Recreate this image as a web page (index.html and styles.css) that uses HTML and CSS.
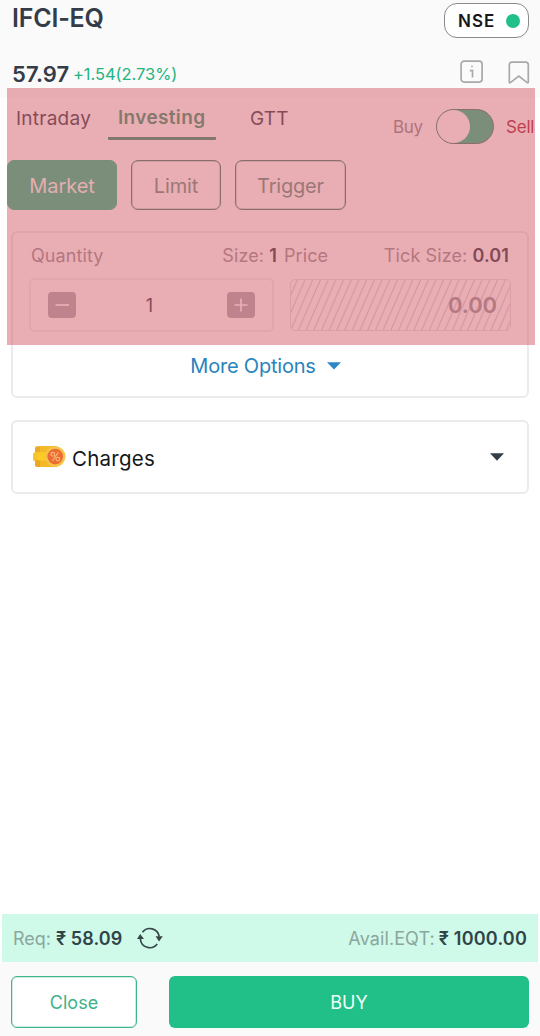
FILE: index.html
```html
<!DOCTYPE html>
<html lang="en">
<head>
<meta charset="utf-8">
<title>IFCI-EQ order</title>
<link rel="stylesheet" href="styles.css">
</head>
<body>
<div class="screen">
  <header class="header">
    <div class="title-row">
      <h1 class="symbol">IFCI-EQ</h1>
      <div class="exchange"><span class="exchange-name">NSE</span><span class="dot"></span></div>
    </div>
    <div class="price-row">
      <span class="price">57.97</span>
      <span class="change">+1.54(2.73%)</span>
      <svg class="info-icon" width="24" height="24" viewBox="0 0 24 24"><rect x="1.1" y="1.1" width="21" height="21" rx="3"/><path d="M9.8 10.6H12.5V17.6M11.3 6.4H12.7"/></svg>
      <svg class="bookmark-icon" width="22" height="24" viewBox="0 0 22 24"><path d="M1.3 21V4Q1.3 1.2 4 1.2H17.7Q20.3 1.2 20.3 4V21Q20.2 22.4 19.2 21.6L10.8 15L2.4 21.6Q1.4 22.4 1.3 21Z"/></svg>
    </div>
  </header>

  <nav class="tabs">
    <span class="tab tab-intraday">Intraday</span>
    <span class="tab tab-active">Investing</span>
    <span class="tab tab-gtt">GTT</span>
    <span class="side side-buy">Buy</span>
    <span class="toggle"><span class="knob"></span></span>
    <span class="side side-sell">Sell</span>
  </nav>

  <div class="order-types">
    <button class="type type-selected">Market</button>
    <button class="type type-limit">Limit</button>
    <button class="type type-trigger">Trigger</button>
  </div>

  <section class="card order-card">
    <div class="fields">
      <div class="field quantity">
        <div class="label-row"><span class="l-quantity">Quantity</span><span class="l-size">Size: <b>1</b></span></div>
        <div class="stepper">
          <span class="step"><svg width="28" height="26" viewBox="0 0 28 26"><path d="M7.5 13H21"/></svg></span>
          <span class="qty">1</span>
          <span class="step"><svg width="28" height="26" viewBox="0 0 28 26"><path d="M7.5 13H20.5M14 6.5V19.5"/></svg></span>
        </div>
      </div>
      <div class="field price-field">
        <div class="label-row"><span class="l-price">Price</span><span class="l-tick">Tick Size: <b>0.01</b></span></div>
        <div class="hatched">
          <svg class="hatch" width="221" height="52"><defs><pattern id="stripe" width="7.7" height="17.6" patternUnits="userSpaceOnUse"><path d="M-7.7 17.6L0 0M0 17.6L7.7 0M7.7 17.6L15.4 0"/></pattern></defs><rect width="221" height="52" fill="url(#stripe)"/></svg>
          <span class="limit-price">0.00</span>
        </div>
      </div>
    </div>
    <div class="more"><span class="more-text">More Options</span><svg width="14" height="8" viewBox="0 0 14 8"><path d="M0 .3H14L7 7.5Z"/></svg></div>
  </section>

  <section class="card charges">
    <svg class="coins" width="34" height="24" viewBox="0 0 34 24">
      <rect x="2" y="1.2" width="23" height="7" rx="2" fill="#e9a72c"/>
      <rect x="0" y="7.2" width="20" height="9" rx="2" fill="#f6c52c"/>
      <rect x="2" y="14.8" width="23" height="7.2" rx="2" fill="#e8a62b"/>
      <path d="M7 1.2H23V22H7Z" fill="#f5b827"/>
      <path d="M5 7.3H18V15.5H5Z" fill="#ffc928"/>
      <circle cx="22.2" cy="11.6" r="10.3" fill="#f6c449"/>
      <circle cx="22.2" cy="11.6" r="7.8" fill="#ee6b35"/>
      <g fill="none" stroke="#f6bd75" stroke-width="1.1"><circle cx="19.8" cy="9.3" r="1.9"/><circle cx="24.8" cy="14.1" r="1.9"/><path d="M25.3 7.4L19.3 16"/></g>
    </svg>
    <span class="charges-text">Charges</span>
    <svg class="charges-caret" width="14" height="8" viewBox="0 0 14 8"><path d="M0 .3H14L7 7.7Z"/></svg>
  </section>

  <div class="margin-bar">
    <span class="m-label m-req">Req:</span>
    <span class="m-value m-reqv">₹ 58.09</span>
    <svg class="refresh" width="26" height="22" viewBox="0 0 26 22"><g fill="none" stroke="#36474a" stroke-width="1.7"><path d="M5.5 5.2A9.4 9.4 0 0 1 22.2 9.5"/><path d="M20.2 17A9.4 9.4 0 0 1 3.4 12"/></g><path d="M18.6 9.2H25.8L22 14.4ZM0 12H7L3.2 7Z" fill="#36474a"/></svg>
    <span class="m-label m-avail">Avail.EQT:</span>
    <span class="m-value m-availv">₹ 1000.00</span>
  </div>
  <footer class="actions">
    <button class="close">Close</button>
    <button class="buy">BUY</button>
  </footer>
  <div class="highlight"></div>
</div>
</body>
</html>
```
FILE: styles.css
```css
* { box-sizing: border-box; }
body { margin: 0; background: #fff; font-family: Inter, "Noto Sans", sans-serif; color: #343c48; }
button { font: inherit; padding: 0; margin: 0; }
b { font-weight: 600; color: #303844; }
span { white-space: nowrap; }
svg { display: block; flex: none; }
.screen { position: relative; width: 540px; height: 1036px; display: flex; flex-direction: column; overflow: hidden; }

.header { height: 98px; background: #fafafa; padding: 3px 11px 0 12px; }
.title-row { display: flex; justify-content: space-between; height: 56px; }
.symbol { margin: 0; font-size: 25px; font-weight: 600; letter-spacing: -.2px; line-height: 31px; }
.exchange { width: 85px; height: 35px; border: 1px solid #8d898d; border-radius: 13px; background: #fff; display: flex; align-items: center; padding: 1px 0 0 13px; }
.exchange-name { font-size: 17px; font-weight: 600; letter-spacing: 1px; color: #15171a; width: 48px; }
.dot { width: 14px; height: 14px; border-radius: 50%; background: #20c088; }
.price-row { display: flex; align-items: center; height: 30px; }
.price { font-size: 22px; font-weight: 600; width: 61px; letter-spacing: .1px; }
.change { font-size: 16.5px; color: #25b37f; letter-spacing: -.05px; }
.info-icon { margin-left: auto; margin-top: -4px; }
.bookmark-icon { margin: -2px -1px 0 24px; }
.info-icon *, .bookmark-icon * { fill: none; stroke: #a9a9a9; stroke-width: 1.7; }

.tabs { height: 62px; display: flex; padding-left: 16px; align-items: flex-start; }
.tab { font-size: 19px; line-height: 24px; letter-spacing: .25px; }
.tab-intraday { width: 92px; padding-top: 9px; }
.tab-active { width: 108px; height: 42px; padding: 8px 0 0 10px; border-bottom: 3px solid #30936f; border-radius: 1px; font-weight: 600; color: #37956f; letter-spacing: .35px; }
.tab-gtt { width: 143px; padding: 9px 0 0 0; margin-left: 34px; }
.side { font-size: 17px; line-height: 22px; padding-top: 18px; }
.side-buy { width: 43px; color: #898b8b; letter-spacing: -.3px; }
.toggle { width: 58px; height: 35px; margin-top: 11px; border-radius: 18px; background: #20c088; border: 1px solid #477f6d; }
.knob { display: block; width: 33px; height: 33px; border-radius: 50%; background: #fff; }
.side-sell { margin-left: 12px; color: #a71f32; letter-spacing: -.2px; }

.order-types { display: flex; height: 71px; padding-left: 7px; gap: 14px; }
.type { height: 50px; width: 110px; border-radius: 7px; font-size: 20px; letter-spacing: -.1px; padding-top: 2px; border: 1px solid #3d8070; box-shadow: inset 0 0 0 .5px #3d807080; background: #fff; color: #639582; }
.type-selected { background: #20c088; border-color: #20c088; box-shadow: none; color: #f3fff8; }
.type-limit { width: 90px; }
.type-trigger { width: 111px; letter-spacing: -.2px; }

.card { margin: 0 11px; border: 2px solid #ebebeb; border-radius: 6px; background: #fff; }
.order-card { height: 167px; padding: 13px 16px 0; }
.fields { display: flex; gap: 16px; }
.quantity { width: 245px; }
.price-field { width: 221px; }
.label-row { display: flex; justify-content: space-between; font-size: 18px; line-height: 20px; color: #929295; height: 32px; letter-spacing: .1px; }
.quantity .label-row { padding-left: 2px; margin-right: -3px; }
.price-field .label-row { margin-left: -6px; padding-right: 2px; }
.stepper { height: 54px; border: 2px solid #f0edf0; border-radius: 5px; display: flex; align-items: center; justify-content: space-between; padding: 0 17px; font-size: 18px; }
.qty { margin-right: 4px; }
.step { background: #abaab0; border-radius: 4px; }
.step path { stroke: #fff; stroke-width: 1.7; }
.hatched { position: relative; height: 52px; border: 1px solid #e2dfe2; border-radius: 5px; overflow: hidden; display: flex; align-items: center; justify-content: flex-end; padding: 0 13px 1px 0; margin-top: 1px; }
.hatch { position: absolute; inset: -1px; }
.hatch path { stroke: #b0aaae; stroke-width: .7; }
.limit-price { position: relative; font-size: 22px; font-weight: 600; color: #97969b; letter-spacing: -.1px; }
.more { display: flex; align-items: center; justify-content: center; gap: 11px; height: 24px; margin: 22px 9px 0 0; color: #2784bd; font-size: 20px; }
.more-text { letter-spacing: -.2px; }
.more path { fill: #2f86c6; }

.charges { height: 74px; margin-top: 22px; display: flex; align-items: center; padding: 0 23px 0 20px; color: #15171a; }
.charges-text { font-size: 20.5px; margin-left: 5px; letter-spacing: .25px; padding-top: 2px; }
.charges-caret { margin-left: auto; }
.charges-caret path { fill: #353d48; }

.margin-bar { margin: auto 2px 0; height: 48px; flex: none; background: #cff9e9; display: flex; align-items: center; padding: 1px 11px 0; font-size: 18px; }
.m-label { color: #8aa79d; }
.m-req { width: 43px; }
.m-value { font-weight: 600; color: #304448; letter-spacing: .1px; }
.m-availv { letter-spacing: .2px; }
.refresh { margin-left: 15px; margin-top: -1px; }
.m-avail { margin-left: auto; margin-right: 4px; letter-spacing: .1px; }
.actions { height: 74px; flex: none; background: #fafafa; display: flex; gap: 32px; padding: 14px 11px 0; }
.actions button { height: 52px; border-radius: 6px; font-size: 18px; padding-top: 1px; }
.close { width: 126px; border: 1px solid #3fb68a; box-shadow: inset 0 0 0 .5px #3fb68a80; background: #fff; color: #3eb387; }
.buy { width: 360px; border: 0; background: #20c088; color: #f1fffa; }
.highlight { position: absolute; left: 7px; top: 88px; width: 528px; height: 257px; background: rgba(211, 91, 105, .5); }
```
